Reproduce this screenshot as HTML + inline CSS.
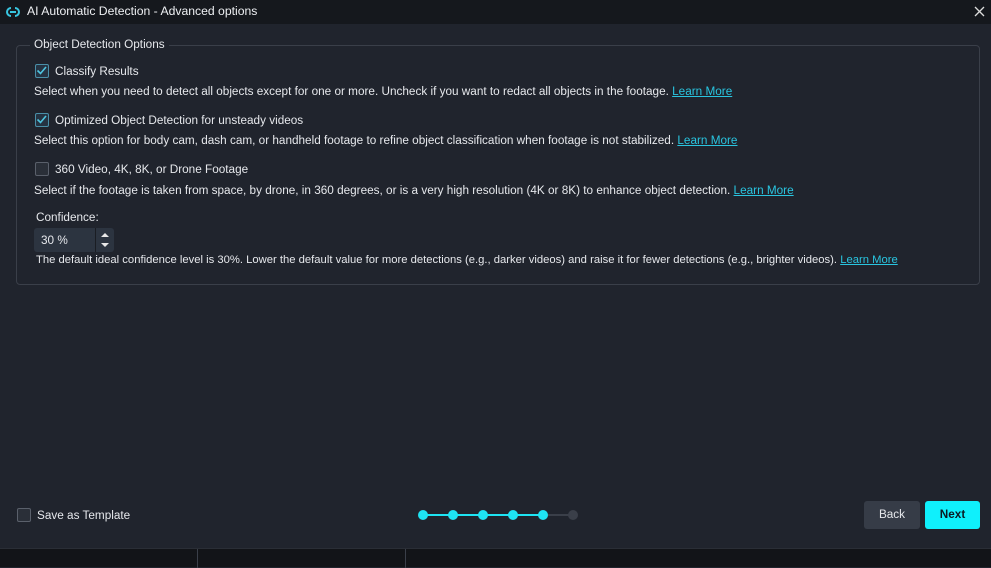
<!DOCTYPE html>
<html><head><style>
*{margin:0;padding:0;box-sizing:border-box}
body{width:991px;height:567px;background:#20242d;font-family:"Liberation Sans",sans-serif;color:#e6e8ec;position:relative;overflow:hidden;font-size:11.75px}
.title{position:absolute;left:0;top:0;width:991px;height:24px;background:#15181d}
.title span{position:absolute;left:27px;top:4px;font-size:12.2px;color:#eef0f3}
.abs{position:absolute;white-space:nowrap}
.box{position:absolute;left:16px;top:45px;width:964px;height:240px;border:1px solid #3a3f49;border-radius:4px}
.leg{position:absolute;left:30px;top:38px;background:#20242d;padding:0 4px}
.cb{position:absolute;width:14px;height:14px;border:1.5px solid #4a8fa8;border-radius:2px;background:#253342}
.cb.off{border-color:#5a606b;background:#2a2f38}
a{color:#29c5e0;text-decoration:underline}
.foot{position:absolute;left:0;top:548px;width:991px;height:19px;background:#121418;border-top:1px solid #2a2e36}
.dot{position:absolute;top:510px;width:10px;height:10px;border-radius:50%;background:#1ee3f2}
</style></head><body>
<div class="title">
<svg style="position:absolute;left:5px;top:4px" width="16" height="16" viewBox="0 0 16 16"><path d="M6 4a4 4 0 1 0 0 8M10 4a4 4 0 1 1 0 8M5 8h6" stroke="#38c6e0" stroke-width="2" fill="none"/></svg>
<span>AI Automatic Detection - Advanced options</span>
<svg style="position:absolute;left:974px;top:6px" width="11" height="11"><path d="M1 1L10 10M10 1L1 10" stroke="#ddd" stroke-width="1.3"/></svg>
</div>
<div class="box"></div>
<div class="abs leg">Object Detection Options</div>
<div class="cb" style="left:35px;top:64px"><svg width="11" height="11" style="position:absolute;left:0;top:0"><path d="M1.5 5.5L4.5 8.5L10 2" stroke="#4ec4df" stroke-width="1.6" fill="none"/></svg></div>
<div class="abs" style="left:55px;top:65px">Classify Results</div>
<div class="abs" style="left:34px;top:85px">Select when you need to detect all objects except for one or more. Uncheck if you want to redact all objects in the footage. <a>Learn More</a></div>
<div class="cb" style="left:35px;top:113px"><svg width="11" height="11" style="position:absolute;left:0;top:0"><path d="M1.5 5.5L4.5 8.5L10 2" stroke="#4ec4df" stroke-width="1.6" fill="none"/></svg></div>
<div class="abs" style="left:55px;top:114px">Optimized Object Detection for unsteady videos</div>
<div class="abs" style="left:34px;top:134px">Select this option for body cam, dash cam, or handheld footage to refine object classification when footage is not stabilized. <a>Learn More</a></div>
<div class="cb off" style="left:35px;top:162px"></div>
<div class="abs" style="left:55px;top:163px">360 Video, 4K, 8K, or Drone Footage</div>
<div class="abs" style="left:34px;top:184px">Select if the footage is taken from space, by drone, in 360 degrees, or is a very high resolution (4K or 8K) to enhance object detection. <a>Learn More</a></div>
<div class="abs" style="left:36px;top:211px">Confidence:</div>
<div style="position:absolute;left:34px;top:228px;width:80px;height:24px;background:#2c3440;border-radius:3px"></div>
<div style="position:absolute;left:95px;top:228px;width:1px;height:24px;background:#1a1d23"></div>
<div class="abs" style="left:41px;top:234px">30 %</div>
<svg style="position:absolute;left:99px;top:230px" width="12" height="20"><path d="M2 7L6 3L10 7Z M2 13L6 17L10 13Z" fill="#e8e8e8"/></svg>
<div class="abs" style="left:36px;top:254px;font-size:11.25px">The default ideal confidence level is 30%. Lower the default value for more detections (e.g., darker videos) and raise it for fewer detections (e.g., brighter videos). <a>Learn More</a></div>
<div class="cb off" style="left:17px;top:508px"></div>
<div class="abs" style="left:37px;top:509px">Save as Template</div>
<div style="position:absolute;left:423px;top:514px;width:120px;height:2px;background:#1ee3f2"></div>
<div style="position:absolute;left:543px;top:514px;width:30px;height:2px;background:#3a3f49"></div>
<div class="dot" style="left:418px"></div><div class="dot" style="left:448px"></div><div class="dot" style="left:478px"></div><div class="dot" style="left:508px"></div><div class="dot" style="left:538px"></div>
<div class="dot" style="left:568px;background:#3a3f49"></div>
<div style="position:absolute;left:864px;top:501px;width:56px;height:28px;background:#363c47;border-radius:3px;text-align:center;line-height:28px">Back</div>
<div style="position:absolute;left:925px;top:501px;width:55px;height:28px;background:#0ff0fc;border-radius:3px;text-align:center;line-height:28px;color:#0b1a22;font-weight:bold">Next</div>
<div class="foot"><div style="position:absolute;left:197px;top:0;width:1px;height:19px;background:#3a3f49"></div><div style="position:absolute;left:405px;top:0;width:1px;height:19px;background:#3a3f49"></div></div>
</body></html>
